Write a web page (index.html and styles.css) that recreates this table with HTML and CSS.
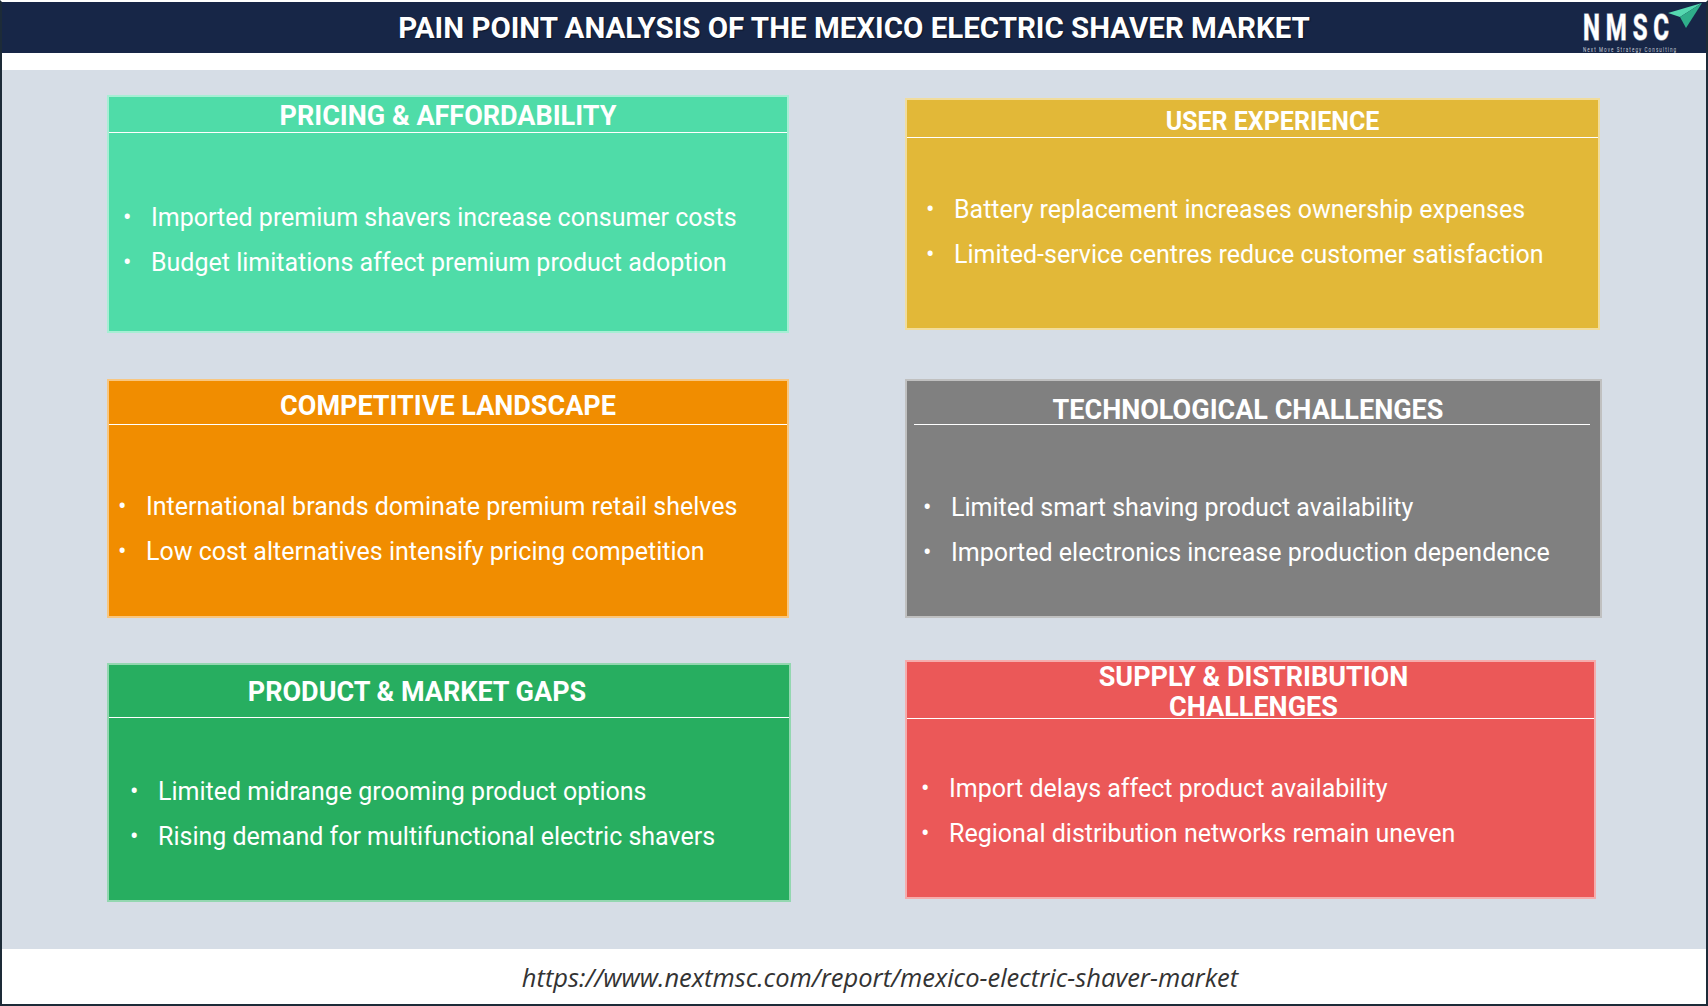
FILE: index.html
```html
<!DOCTYPE html>
<html lang="en">
<head>
<meta charset="utf-8">
<title>Pain Point Analysis of the Mexico Electric Shaver Market</title>
<link rel="stylesheet" href="styles.css">
</head>
<body>
<div class="frame">
  <header class="topbar">
    <h1 class="title">PAIN POINT ANALYSIS OF THE MEXICO ELECTRIC SHAVER MARKET</h1>
    <svg class="logo" width="134" height="51" viewBox="0 0 134 51" aria-label="NMSC logo">
      <polygon points="127,1 93,11 105,15" fill="#55d8b0"/>
      <polygon points="127,1 105,15 111,26" fill="#2fae8a"/>
      <text class="logo-text" transform="scale(0.65 1)"><tspan class="logo-word" x="12.3" y="38">NMSC</tspan><tspan class="logo-sub" x="12.3" y="50">Next Move Strategy Consulting</tspan></text>
    </svg>
  </header>
  <div class="spacer"></div>
  <main class="board">
    <section class="card c1">
      <div class="card-head"><h2>PRICING &amp; AFFORDABILITY</h2></div>
      <ul class="card-body">
        <li><span class="dot">•</span>Imported premium shavers increase consumer costs</li>
        <li><span class="dot">•</span>Budget limitations affect premium product adoption</li>
      </ul>
    </section>
    <section class="card c2">
      <div class="card-head"><h2>USER EXPERIENCE</h2></div>
      <ul class="card-body">
        <li><span class="dot">•</span>Battery replacement increases ownership expenses</li>
        <li><span class="dot">•</span>Limited-service centres reduce customer satisfaction</li>
      </ul>
    </section>
    <section class="card c3">
      <div class="card-head"><h2>COMPETITIVE LANDSCAPE</h2></div>
      <ul class="card-body">
        <li><span class="dot">•</span>International brands dominate premium retail shelves</li>
        <li><span class="dot">•</span>Low cost alternatives intensify pricing competition</li>
      </ul>
    </section>
    <section class="card c4">
      <div class="card-head"><h2>TECHNOLOGICAL CHALLENGES</h2></div>
      <ul class="card-body">
        <li><span class="dot">•</span>Limited smart shaving product availability</li>
        <li><span class="dot">•</span>Imported electronics increase production dependence</li>
      </ul>
    </section>
    <section class="card c5">
      <div class="card-head"><h2>PRODUCT &amp; MARKET GAPS</h2></div>
      <ul class="card-body">
        <li><span class="dot">•</span>Limited midrange grooming product options</li>
        <li><span class="dot">•</span>Rising demand for multifunctional electric shavers</li>
      </ul>
    </section>
    <section class="card c6">
      <div class="card-head"><h2>SUPPLY &amp; DISTRIBUTION<br>CHALLENGES</h2></div>
      <ul class="card-body">
        <li><span class="dot">•</span>Import delays affect product availability</li>
        <li><span class="dot">•</span>Regional distribution networks remain uneven</li>
      </ul>
    </section>
  </main>
  <footer class="foot">https://www.nextmsc.com/report/mexico-electric-shaver-market</footer>
</div>
</body>
</html>
```

FILE: styles.css
```css
html, body {
  margin: 0;
  padding: 0;
  background: #ffffff;
}

.frame {
  width: 1708px;
  height: 1006px;
  box-sizing: border-box;
  border: 2px solid #1d2b38;
  border-top: 2px solid #ffffff;
  display: flex;
  flex-direction: column;
  font-family: Roboto, "Liberation Sans", sans-serif;
}

.topbar {
  flex: none;
  height: 51px;
  background: #172647;
  position: relative;
  display: flex;
  align-items: center;
  justify-content: center;
}

.title {
  margin: 0;
  font: 700 29.5px/34px Roboto, "Liberation Sans", sans-serif;
  color: #ffffff;
  text-shadow: 1px 1px 1px rgba(0, 0, 0, 0.45);
}

.logo {
  position: absolute;
  left: 1573px;
  top: 0;
}

.logo-text {
  font-family: Roboto, "Liberation Sans", sans-serif;
}

.logo-word {
  font-size: 37px;
  font-weight: 700;
  letter-spacing: 9px;
  fill: #ffffff;
  stroke: #8e97a8;
  stroke-width: 1.4px;
  paint-order: stroke;
}

.logo-sub {
  font-size: 7px;
  font-weight: 400;
  letter-spacing: 1.7px;
  fill: #c9ced8;
  stroke: none;
}

.spacer {
  flex: none;
  height: 17px;
}

.board {
  flex: none;
  height: 879px;
  box-sizing: border-box;
  background: #d6dde6;
  padding: 25px 0 0 105px;
  display: grid;
  grid-template-columns: 684px 697px;
  grid-template-rows: 284px 281px 1fr;
  column-gap: 114px;
  align-items: start;
}

.card {
  box-sizing: border-box;
  border: 2px solid rgba(255, 255, 255, 0.5);
  display: flex;
  flex-direction: column;
  color: #ffffff;
}

.card-head {
  flex: none;
  box-sizing: border-box;
  border-bottom: 1px solid #ffffff;
  display: flex;
  align-items: center;
  justify-content: center;
}

.card-head h2 {
  margin: 0;
  font: 700 27px/30px Roboto, "Liberation Sans", sans-serif;
  text-align: center;
}

.card-body {
  flex: 1;
  margin: 0;
  list-style: none;
  display: flex;
  flex-direction: column;
  justify-content: center;
  gap: 15px;
  font: 400 25px/30px Roboto, "Liberation Sans", sans-serif;
  box-sizing: border-box;
}

.card-body li {
  display: flex;
  white-space: nowrap;
}

.dot {
  flex: none;
  width: 28px;
}

/* individual cards */
.c1 { width: 682px; height: 238px; background: #4fdca8; }
.c1 .card-head { height: 36px; padding-top: 2px; }
.c1 .card-body { padding: 17px 0 0 14px; }

.c2 { width: 695px; height: 232px; margin-top: 3px; background: #e2b838; }
.c2 .card-head { height: 38px; padding-top: 7px; padding-left: 40px; }
.c2 .card-head h2 { font-size: 25px; }
.c2 .card-body { padding: 0 0 2px 19px; }

.c3 { width: 682px; height: 239px; background: #f18d00; }
.c3 .card-head { height: 44px; padding-top: 7px; }
.c3 .card-body { padding: 18px 0 0 9px; }

.c4 { width: 697px; height: 239px; background: #808080; }
.c4 .card-head { height: 44px; padding-top: 14px; padding-right: 8px; margin: 0 10px 0 7px; }
.c4 .card-body { padding: 19px 0 0 16px; }

.c5 { width: 684px; height: 239px; margin-top: 3px; background: #27ae60; }
.c5 .card-head { height: 53px; padding-top: 2px; padding-right: 64px; }
.c5 .card-body { padding: 11px 0 0 21px; }

.c6 { width: 691px; height: 239px; background: #eb5858; }
.c6 .card-head { height: 57px; padding-top: 3px; padding-left: 6px; }
.c6 .card-body { padding: 7px 0 0 14px; }

.foot {
  flex: 1;
  display: flex;
  align-items: center;
  justify-content: center;
  padding-left: 52px;
  font: italic 400 25.5px "Open Sans", "DejaVu Sans", sans-serif;
  color: #333333;
}
```
